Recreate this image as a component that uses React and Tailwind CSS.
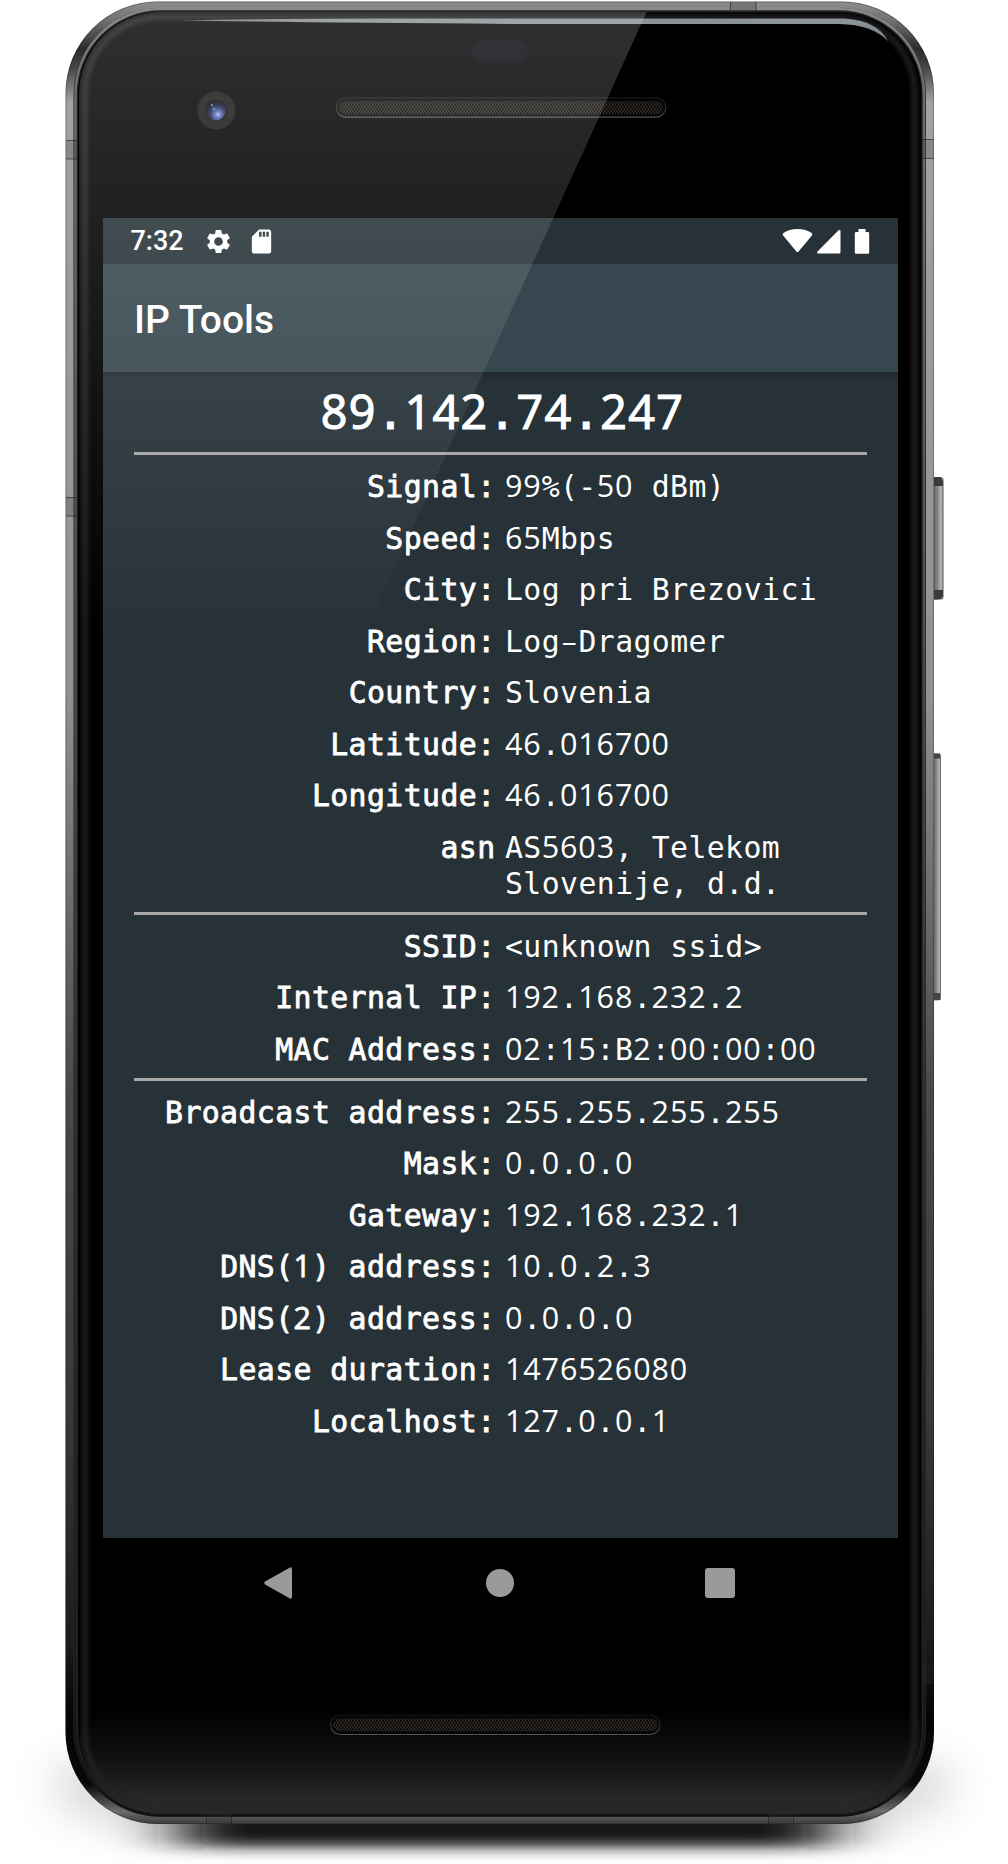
import React from "react";
import { MdSettings, MdSdCard } from "react-icons/md";

const network = [
  ["Signal:", ["99%(-50 dBm)"]],
  ["Speed:", ["65Mbps"]],
  ["City:", ["Log pri Brezovici"]],
  ["Region:", ["Log–Dragomer"]],
  ["Country:", ["Slovenia"]],
  ["Latitude:", ["46.016700"]],
  ["Longitude:", ["46.016700"]],
  ["asn", ["AS5603, Telekom", "Slovenije, d.d."]],
];
const local = [
  ["SSID:", ["<unknown ssid>"]],
  ["Internal IP:", ["192.168.232.2"]],
  ["MAC Address:", ["02:15:B2:00:00:00"]],
];
const dhcp = [
  ["Broadcast address:", ["255.255.255.255"]],
  ["Mask:", ["0.0.0.0"]],
  ["Gateway:", ["192.168.232.1"]],
  ["DNS(1) address:", ["10.0.2.3"]],
  ["DNS(2) address:", ["0.0.0.0"]],
  ["Lease duration:", ["1476526080"]],
  ["Localhost:", ["127.0.0.1"]],
];

// Monospaced text whose digits use plain, undotted zeros at the same advance.
function Mono({ text }) {
  return text.split(/(\d+|–)/).map((part, i) => {
    if (/^\d/.test(part)) {
      return (
        <span key={i} className="font-['Open_Sans',sans-serif] text-[1.024em] leading-[0] tracking-[0.0285em]">
          {part}
        </span>
      );
    }
    if (part === "–") {
      return (
        <span key={i} className="inline-block w-[18.36px] text-center font-['Open_Sans',sans-serif] leading-[0] tracking-normal">
          {part}
        </span>
      );
    }
    return part;
  });
}

function Row({ label, lines }) {
  return (
    <div className="flex pt-[5.500px] pb-[10px]">
      <div className="w-[361.500px] shrink-0 whitespace-pre text-right [-webkit-text-stroke:0.8px_white]">
        <Mono text={label} />
      </div>
      <div className="ml-[9.500px] whitespace-pre">
        {lines.map((l) => (
          <div key={l} className="h-[36px]">
            <Mono text={l} />
          </div>
        ))}
      </div>
    </div>
  );
}

function Section({ rows }) {
  return (
    <section className="mr-[31px] border-t-[3px] border-[#a9a6a8] pt-[8.5px]">
      {rows.map(([label, lines]) => (
        <Row key={label} label={label} lines={lines} />
      ))}
    </section>
  );
}

function Grille({ x, y }) {
  return (
    <g>
      <rect x={x} y={y} width="329.500" height="19.500" rx="9.750" fill="#050505" stroke="url(#grilleEdge)" strokeWidth="1.2" />
      <rect x={x + 2.5} y={y + 3.5} width="324.500" height="13" rx="6.5" fill="#0a0908" />
      <rect x={x + 2.5} y={y + 3.5} width="324.500" height="13" rx="6.5" fill="url(#mesh)" />
    </g>
  );
}

function Hardware() {
  return (
    <svg className="absolute inset-0" width="1008" height="1864" viewBox="0 0 1008 1864">
      <defs>
        <linearGradient id="metal" x1="0" y1="0" x2="0" y2="1">
          <stop offset="0" stopColor="#8e8e8e" />
          <stop offset="0.01" stopColor="#727272" />
          <stop offset="0.026" stopColor="#2c2c2c" />
          <stop offset="0.036" stopColor="#444" />
          <stop offset="0.055" stopColor="#a2a2a2" />
          <stop offset="0.38" stopColor="#919191" />
          <stop offset="0.5" stopColor="#6a6a6a" />
          <stop offset="0.6" stopColor="#494949" />
          <stop offset="0.78" stopColor="#383838" />
          <stop offset="0.9" stopColor="#1c1c1c" />
          <stop offset="0.94" stopColor="#050505" />
          <stop offset="0.978" stopColor="#080808" />
          <stop offset="0.993" stopColor="#6c6c6c" />
          <stop offset="1" stopColor="#3b3b3b" />
        </linearGradient>
        <linearGradient id="innerMetal" x1="0" y1="0" x2="0" y2="1">
          <stop offset="0" stopColor="#8a8a8a" />
          <stop offset="0.04" stopColor="#6e6e6e" />
          <stop offset="0.3" stopColor="#525252" />
          <stop offset="0.6" stopColor="#303030" />
          <stop offset="0.9" stopColor="#1c1c1c" />
          <stop offset="1" stopColor="#111" />
        </linearGradient>
        <linearGradient id="chin" x1="0" y1="1710" x2="0" y2="1813" gradientUnits="userSpaceOnUse">
          <stop offset="0" stopColor="#2e2e2e" stopOpacity="0" />
          <stop offset="0.5" stopColor="#2e2e2e" stopOpacity="0.4" />
          <stop offset="1" stopColor="#303030" />
        </linearGradient>
        <linearGradient id="grilleEdge" x1="0" y1="0" x2="0" y2="1">
          <stop offset="0" stopColor="#151515" />
          <stop offset="0.6" stopColor="#2c2c2c" />
          <stop offset="1" stopColor="#55534d" />
        </linearGradient>
        <linearGradient id="shine" x1="180" y1="0" x2="890" y2="0" gradientUnits="userSpaceOnUse">
          <stop offset="0" stopColor="#9a9fa1" stopOpacity="0.7" />
          <stop offset="0.2" stopColor="#878d8f" />
          <stop offset="0.94" stopColor="#8d9498" />
          <stop offset="1" stopColor="#9aa1a5" stopOpacity="0.8" />
        </linearGradient>
        <linearGradient id="key" x1="0" y1="0" x2="1" y2="0">
          <stop offset="0" stopColor="#4a4a4a" />
          <stop offset="0.55" stopColor="#909090" />
          <stop offset="0.8" stopColor="#b9b9b9" />
          <stop offset="1" stopColor="#555" />
        </linearGradient>
        <radialGradient id="lens" cx="0.6" cy="0.7" r="0.65">
          <stop offset="0" stopColor="#b3bdf0" />
          <stop offset="0.25" stopColor="#5a69b6" />
          <stop offset="0.6" stopColor="#1c2550" />
          <stop offset="1" stopColor="#0b0b10" />
        </radialGradient>
        <pattern id="mesh" width="3" height="4" patternUnits="userSpaceOnUse">
          <rect width="1.2" height="2" fill="#35322b" />
          <rect x="1.5" y="2" width="1.2" height="2" fill="#35322b" />
        </pattern>
        <filter id="soft" x="-30%" y="-80%" width="160%" height="260%">
          <feGaussianBlur stdDeviation="34 7" />
        </filter>
        <filter id="softer" x="-30%" y="-60%" width="160%" height="220%">
          <feGaussianBlur stdDeviation="22 18" />
        </filter>
        <filter id="edge" x="-10%" y="-10%" width="120%" height="120%">
          <feGaussianBlur stdDeviation="2.5" />
        </filter>
        <clipPath id="floor">
          <rect x="0" y="1690" width="1008" height="174" />
        </clipPath>
        <clipPath id="glassClip">
          <rect x="78" y="12" width="843.5" height="1801" rx="82" />
        </clipPath>
      </defs>
      <g clipPath="url(#floor)">
        <path d="M55 1760h895v40q-30 32-120 32H175q-95 0-120-32z" fill="#777" opacity="0.24" filter="url(#softer)" />
        <path d="M180 1790H830V1847H180z" fill="#161616" filter="url(#soft)" />
      </g>
      <rect x="932" y="477" width="11.5" height="123" rx="3" fill="url(#key)" />
      <path d="M934 477h7l2 5v4h-9zM934 590h9v6l-2 3h-7z" fill="#3a3a3a" />
      <rect x="932" y="753.5" width="9" height="247" rx="2.5" fill="url(#key)" />
      <path d="M934 753.500h6v5h-6zM934 993h6v7h-6z" fill="#444" />
      <rect x="65.5" y="1.5" width="868.5" height="1822.5" rx="92" fill="url(#metal)" />
      <rect x="66" y="2" width="867.5" height="1821.5" rx="91.5" fill="none" stroke="#111" strokeOpacity="0.3" />
      <rect x="73.5" y="8" width="852.5" height="1808.5" rx="87" fill="#242424" />
      <rect x="75.5" y="9" width="848.5" height="1806.5" rx="85" fill="none" stroke="url(#innerMetal)" strokeWidth="2.5" />
      <rect x="78" y="12" width="843.5" height="1801" rx="82" fill="#000" />
      <g fill="#333" fillOpacity="0.22">
        <path d="M66 140.500h12v18.500H66zM922 139.500h12v18.500h-12zM730.500 2h25.500v10h-25.500zM66 497h12v19H66zM922 1664.500h12v18.500h-12z" />
        <path d="M206.500 1813h25v11h-25zM768.500 1813h25v11h-25z" />
      </g>
      <path
        d="M66 140.500h12M66 159h12M922 139.500h12M922 158.500h12M730.500 2v10M756 2v10M66 497.500h12M66 516h12M922 1664.500h12M922 1683h12M206.500 1813v11M231.500 1813v11M768.500 1813v11M793.500 1813v11"
        stroke="#222"
        strokeOpacity="0.65"
      />
      <g clipPath="url(#glassClip)">
        <rect x="78" y="1700" width="844" height="113" fill="url(#chin)" />
        <rect x="85" y="17" width="829.500" height="1792" rx="76" fill="none" stroke="#242424" strokeWidth="5" filter="url(#edge)" />
      </g>
      <rect x="471" y="41" width="57" height="20.500" rx="10.250" fill="#05060d" />
      <path d="M180 20.500Q260 18.500 380 18.500H845Q878 21 888 41Q872 24.500 840 24H520Q300 22.500 180 20.500z" fill="url(#shine)" />
      <circle cx="216.300" cy="110.500" r="19" fill="#191616" />
      <circle cx="216" cy="110.500" r="11" fill="#0c0c0c" />
      <circle cx="216" cy="110.500" r="9.800" fill="url(#lens)" />
      <circle cx="214" cy="109" r="1.800" fill="#4c68bf" />
      <circle cx="212" cy="105" r="1" fill="#7e8cd0" />
      <Grille x={336.3} y={97.700} />
      <Grille x={330.500} y={1715} />
    </svg>
  );
}

function Glare() {
  return (
    <svg className="pointer-events-none absolute inset-0" width="1008" height="1864" viewBox="0 0 1008 1864">
      <defs>
        <linearGradient id="glare" x1="0" y1="0" x2="0" y2="650" gradientUnits="userSpaceOnUse">
          <stop offset="0" stopColor="#fff" stopOpacity="0.19" />
          <stop offset="1" stopColor="#fff" stopOpacity="0" />
        </linearGradient>
        <clipPath id="glassShape">
          <rect x="79" y="12" width="842" height="1801" rx="82" />
        </clipPath>
      </defs>
      <path d="M0 0H652L357.500 650H0z" fill="url(#glare)" clipPath="url(#glassShape)" />
    </svg>
  );
}

export default function App() {
  return (
    <div className="relative h-[1864px] w-[1008px] overflow-hidden bg-white pt-[218px] pl-[103px]">
      <Hardware />
      <main className="relative flex h-[1319.500px] w-[795px] flex-col bg-[#263238] text-white">
        <header className="flex h-[46px] shrink-0 items-center pl-[27.500px] font-['Roboto',sans-serif]">
          <span className="w-[73.500px] text-[27px] leading-[48px] font-medium">7:32</span>
          <MdSettings className="size-[29px]" />
          <MdSdCard className="ml-[14px] size-[29px]" />
          <svg className="mb-px ml-auto mr-[28px]" width="88" height="26" viewBox="0 0 88 26" fill="#fff">
            <path d="M15.500 24Q14.900 24 14.400 23.400L.9 7.300Q.2 6 1.400 5Q7 1 15.500 1T29.600 5Q30.800 6 30.100 7.300L16.600 23.400Q16.100 24 15.500 24z" />
            <path d="M57 2Q58.500 1.500 58.500 3V24Q58.500 25.500 57 25.500H36Q34.300 25.300 35.300 23.800L56.300 2.600z" />
            <path d="M76.500 1h7v3H86q1.200 0 1.200 1.200V24.500q0 1.200-1.200 1.200H74q-1.200 0-1.200-1.200V5.200Q72.800 4 74 4h2.500z" />
          </svg>
        </header>
        <h1 className="h-[108px] shrink-0 bg-[#37474f] pl-[31px] font-['Roboto',sans-serif] text-[39px] leading-[113px] font-medium">
          IP Tools
        </h1>
        <div className="flex-1 bg-linear-to-b from-[#20292e] to-[#263238] to-[8px] pl-[31px] font-['DejaVu_Sans_Mono',monospace] text-[29.800px] leading-[36px] tracking-[0.420px]">
          <div className="mr-[27px] h-[80px] pt-[14px] text-center text-[45.500px] leading-[56px] tracking-[0.500px] [-webkit-text-stroke:1.200px_white]">
            <Mono text="89.142.74.247" />
          </div>
          <Section rows={network} />
          <Section rows={local} />
          <Section rows={dhcp} />
        </div>
      </main>
      <nav className="relative flex h-[91px] w-[795px] items-center pl-[161px]">
        <svg width="28" height="32" viewBox="0 0 28 32" fill="#9a9a9a">
          <path d="M26 .4Q28 -.3 28 2V30Q28 32.300 26 31.600L1 17.500Q-.4 16 1 14.500z" />
        </svg>
        <div className="ml-[194px] size-[28px] rounded-full bg-[#9a9a9a]" />
        <div className="ml-[191px] size-[30px] rounded-[3px] bg-[#9a9a9a]" />
      </nav>
      <Glare />
    </div>
  );
}
